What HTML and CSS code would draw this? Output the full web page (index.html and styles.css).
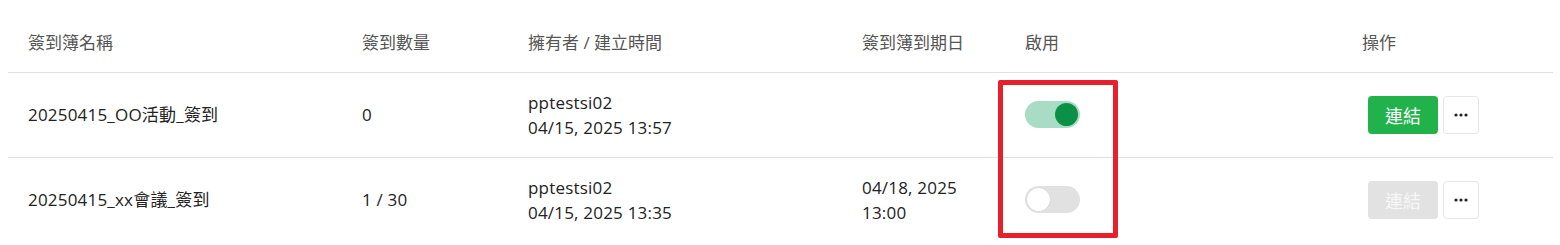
FILE: index.html
```html
<!DOCTYPE html>
<html lang="zh-Hant">
<head>
<meta charset="utf-8">
<title>簽到簿</title>
<link rel="stylesheet" href="styles.css">
</head>
<body>
<div class="wrap">
  <table class="grid">
    <colgroup>
      <col class="c-name"><col class="c-count"><col class="c-owner"><col class="c-due"><col class="c-on"><col class="c-act">
    </colgroup>
    <thead>
      <tr>
        <th>簽到簿名稱</th>
        <th>簽到數量</th>
        <th>擁有者 / 建立時間</th>
        <th>簽到簿到期日</th>
        <th>啟用</th>
        <th>操作</th>
      </tr>
    </thead>
    <tbody>
      <tr>
        <td>20250415_OO活動_簽到</td>
        <td>0</td>
        <td>pptestsi02<br>04/15, 2025 13:57</td>
        <td></td>
        <td><span class="toggle on"><span class="knob"></span></span></td>
        <td>
          <div class="acts">
            <button class="btn-link">連結</button>
            <button class="btn-more"><svg width="14" height="4" viewBox="0 0 14 4"><circle cx="2" cy="2" r="1.6"/><circle cx="7" cy="2" r="1.6"/><circle cx="12" cy="2" r="1.6"/></svg></button>
          </div>
        </td>
      </tr>
      <tr>
        <td>20250415_xx會議_簽到</td>
        <td>1 / 30</td>
        <td>pptestsi02<br>04/15, 2025 13:35</td>
        <td>04/18, 2025<br>13:00</td>
        <td><span class="toggle off"><span class="knob"></span></span></td>
        <td>
          <div class="acts">
            <button class="btn-link disabled">連結</button>
            <button class="btn-more"><svg width="14" height="4" viewBox="0 0 14 4"><circle cx="2" cy="2" r="1.6"/><circle cx="7" cy="2" r="1.6"/><circle cx="12" cy="2" r="1.6"/></svg></button>
          </div>
        </td>
      </tr>
    </tbody>
  </table>
  <div class="highlight"></div>
</div>
</body>
</html>
```

FILE: styles.css
```css
html, body {
  margin: 0;
  padding: 0;
  background: #ffffff;
}
body {
  font-family: "Open Sans", "Noto Sans CJK TC", sans-serif;
  font-size: 17px;
  color: #222222;
}
.wrap {
  position: relative;
  padding: 0 7px 0 8px;
}
.grid {
  width: 100%;
  border-collapse: collapse;
  table-layout: fixed;
}
.c-name { width: 334px; }
.c-count { width: 166px; }
.c-owner { width: 334px; }
.c-due { width: 163px; }
.c-on { width: 337px; }
.grid th {
  height: 72px;
  padding: 0 20px 17px 20px;
  box-sizing: border-box;
  text-align: left;
  vertical-align: bottom;
  font-weight: 400;
  color: #555555;
  line-height: 25px;
  border-bottom: 1px solid #e2e2e2;
}
.grid td {
  height: 84px;
  padding: 0 20px;
  vertical-align: middle;
  line-height: 25px;
  letter-spacing: 0.2px;
  border-bottom: 1px solid #e2e2e2;
}
.grid tbody tr:last-child td {
  border-bottom: none;
}
.toggle {
  display: block;
  width: 55px;
  height: 27px;
  border-radius: 14px;
  position: relative;
  box-sizing: border-box;
}
.toggle .knob {
  position: absolute;
  top: 2px;
  width: 23px;
  height: 23px;
  border-radius: 50%;
}
.toggle.on { background: #a9dcc4; }
.toggle.on .knob { right: 2px; background: #0b9047; }
.toggle.off { background: #e1e1e1; }
.toggle.off .knob {
  left: 2px;
  background: #ffffff;
  box-shadow: 0 0 1px rgba(0,0,0,0.2);
}
.acts {
  display: flex;
  gap: 5px;
  margin-left: 6px;
}
.btn-link {
  width: 70px;
  height: 38px;
  border: none;
  border-radius: 4px;
  background: #22b24c;
  color: #ffffff;
  font-family: "Noto Sans CJK TC", sans-serif;
  font-size: 18px;
  padding: 0;
}
.btn-link.disabled {
  background: #e2e2e2;
  color: #f7f7f7;
}
.btn-more {
  width: 36px;
  height: 38px;
  border: 1px solid #e6e6e6;
  border-radius: 4px;
  background: #ffffff;
  padding: 0;
  display: flex;
  align-items: center;
  justify-content: center;
}
.btn-more svg { fill: #222222; }
.highlight {
  position: absolute;
  left: 998px;
  top: 80px;
  width: 120px;
  height: 158px;
  box-sizing: border-box;
  border: 5px solid #e8202b;
  border-radius: 2px;
}
```
